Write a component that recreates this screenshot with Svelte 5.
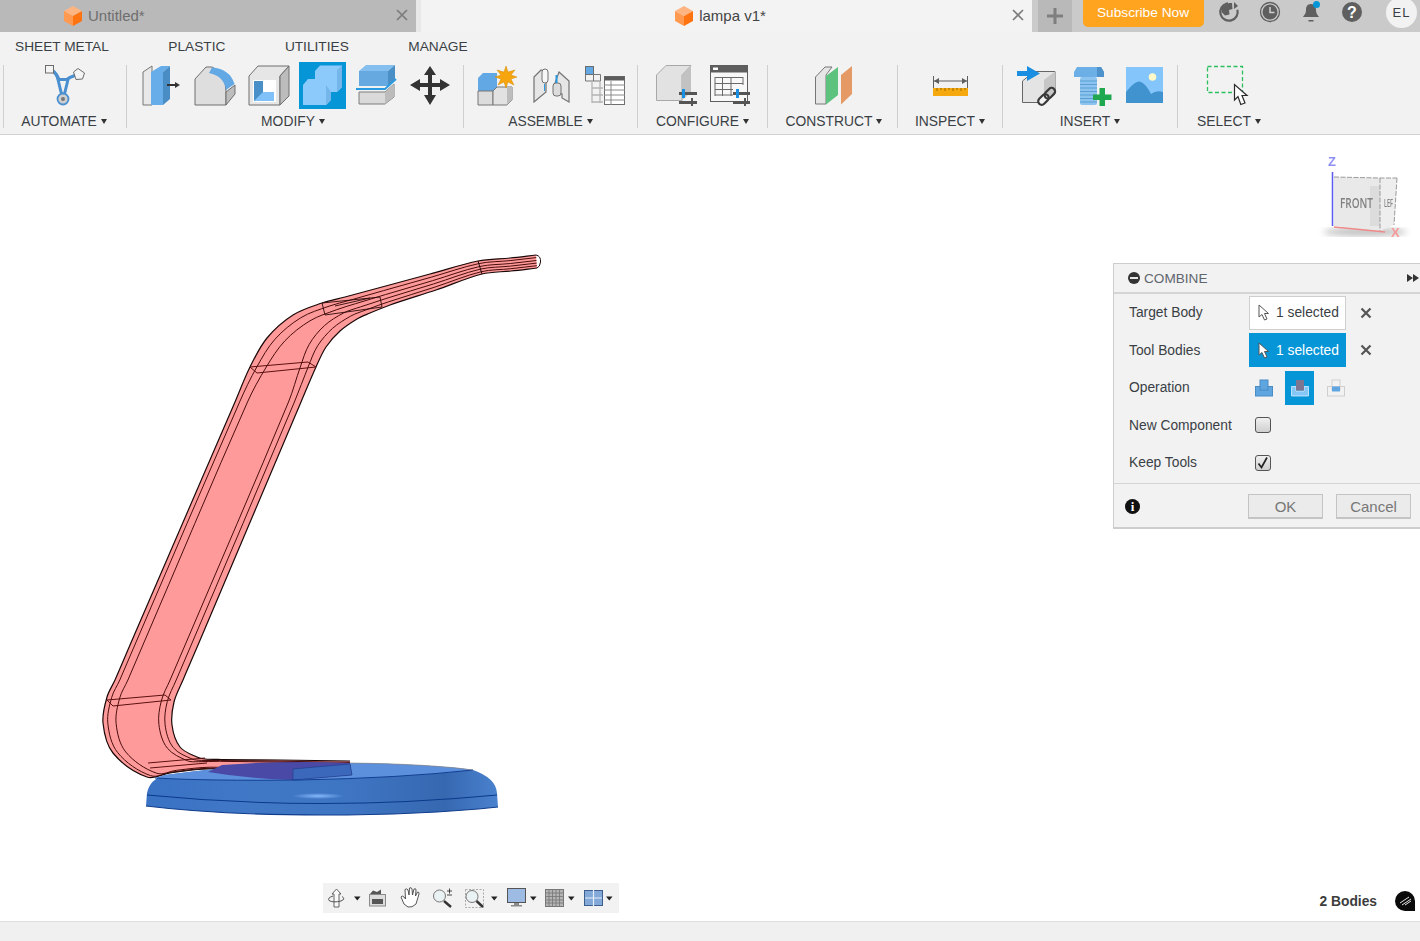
<script>
	// matched points along the two long edges of the lamp arm, foot to tip
	const outer = [[350,775],[280,772],[208,769],[170,773],[147,777],[113,753],[103,723],[107,697],[115,680],[130,645],[235,402],[250,367],[267,338],[293,315],[322,303],[345,297],[382,287],[430,274],[478,261],[510,258],[536,255]];
	const inner = [[350,761],[280,760],[222,759.5],[205,759],[197,757],[180,747],[172,725],[174,702],[183,680],[198,645],[301,402],[316,367],[326,347],[340,331],[357,319],[370,313],[390,305],[436,290],[482,274],[511,271],[537,268]];

	function spline(pts) {
		let d = `M${pts[0][0]} ${pts[0][1]}`;
		for (let i = 0; i < pts.length - 1; i++) {
			const p0 = pts[Math.max(i - 1, 0)];
			const p1 = pts[i];
			const p2 = pts[i + 1];
			const p3 = pts[Math.min(i + 2, pts.length - 1)];
			// clamp the tangents so a long straight run next to a short one can't overshoot
			const len = Math.hypot(p2[0] - p1[0], p2[1] - p1[1]);
			const tan = (a, b) => {
				const l = Math.hypot(b[0] - a[0], b[1] - a[1]) || 1;
				return [((b[0] - a[0]) / l) * len / 3, ((b[1] - a[1]) / l) * len / 3];
			};
			const t1 = tan(p0, p2);
			const t2 = tan(p1, p3);
			d += ` C${(p1[0] + t1[0]).toFixed(1)} ${(p1[1] + t1[1]).toFixed(1)} ${(p2[0] - t2[0]).toFixed(1)} ${(p2[1] - t2[1]).toFixed(1)} ${p2[0]} ${p2[1]}`;
		}
		return d;
	}

	// the inner lines sit near the edges on the wide part and spread out on the thin part
	function between(low, high) {
		return spline(outer.map((p, i) => {
			const k = Math.min(Math.max((i - 10) / 4, 0), 1);
			const t = low + (high - low) * k;
			return [
				+(p[0] + (inner[i][0] - p[0]) * t).toFixed(1),
				+(p[1] + (inner[i][1] - p[1]) * t).toFixed(1)
			];
		}));
	}

	const outerPath = spline(outer);
	const innerPath = spline(inner);
	const armFill = outerPath + " L" + spline([...inner].reverse()).slice(1) + " Z";
	const armLines = [[0.07, 0.2], [0.19, 0.42], [0.81, 0.62], [0.9, 0.82]].map(([a, b]) => between(a, b));

	const ribbonTabs = ["SHEET METAL", "PLASTIC", "UTILITIES", "MANAGE"];
</script>

{#snippet cube()}
	<svg class="cube" viewBox="0 0 18 20" aria-hidden="true">
		<path d="M9 0 L18 5 L9 10 L0 5Z" fill="#ffb581" />
		<path d="M0 5 L9 10 V20 L0 15Z" fill="#ff9a50" />
		<path d="M18 5 L9 10 V20 L18 15Z" fill="#ff7410" />
	</svg>
{/snippet}

{#snippet close()}
	<svg class="tab-close" viewBox="0 0 12 12" width="12" height="12" aria-hidden="true">
		<path d="M1 1 L11 11 M11 1 L1 11" stroke="#7c7c7c" stroke-width="1.700" />
	</svg>
{/snippet}

{#snippet caret()}
	<span class="caret"></span>
{/snippet}

<div class="app">
	<header class="tabbar">
		<div class="tab inactive">
			{@render cube()}
			<span class="tab-title">Untitled*</span>
			{@render close()}
		</div>
		<div class="tab-gap"></div>
		<div class="tab active">
			{@render cube()}
			<span class="tab-title">lampa v1*</span>
			{@render close()}
		</div>
		<div class="plus">
			<svg viewBox="0 0 16 16" width="16" height="16"><path d="M6.5 0h3v6.5H16v3H9.500V16h-3V9.500H0v-3h6.500z" fill="#7f7f7f" /></svg>
		</div>
		<div class="subscribe">Subscribe Now</div>
		<div class="top-icons">
			<svg viewBox="0 0 22 22" width="22" height="22">
				<circle cx="11" cy="11" r="8.700" fill="none" stroke="#5f5f5f" stroke-width="2.200" stroke-dasharray="42 13" transform="rotate(-15 11 11)" />
				<path d="M4 6 L11 2 L14 2 L14.500 8 L11 9 L11.500 13.500 L7 14.500 L3.500 11Z" fill="#5f5f5f" />
				<path d="M16 1 L20 5 L16 8Z" fill="#5f5f5f" />
			</svg>
			<svg viewBox="0 0 22 22" width="22" height="22">
				<circle cx="11" cy="11" r="9.500" fill="none" stroke="#5f5f5f" stroke-width="1.300" />
				<circle cx="11" cy="11" r="7.500" fill="#5f5f5f" />
				<path d="M11 6v5.500h4.500" fill="none" stroke="#d0d0d0" stroke-width="1.500" />
			</svg>
			<svg viewBox="0 0 22 22" width="22" height="22">
				<path d="M11 3c-4 0-5 3-5 6 0 4-2 5-3 7h16c-1-2-3-3-3-7 0-3-1-6-5-6z" fill="#5f5f5f" />
				<path d="M8.500 19h5v1.500h-5z" fill="#5f5f5f" />
				<circle cx="16.500" cy="3.500" r="3.500" fill="#0696d7" />
			</svg>
			<svg viewBox="0 0 22 22" width="22" height="22">
				<circle cx="11" cy="11" r="10" fill="#5f5f5f" />
				<text class="help" x="11" y="16.500" text-anchor="middle">?</text>
			</svg>
		</div>
		<div class="avatar">EL</div>
	</header>

	<nav class="ribbon-tabs">
		{#each ribbonTabs as t}
			<span>{t}</span>
		{/each}
	</nav>

	<section class="tools">
		<i class="sep"></i>
		<div class="group g-automate">
			<div class="icons">
				<div class="cell"><svg viewBox="39 62 48 48">
					<path d="M52 70 Q57 74 59 80 M76 75 Q70 77 66 80" fill="none" stroke="#4a90d0" stroke-width="3.400" />
					<path d="M58 79.500 H68 L64.500 94 H61.500Z" fill="#f2f2f2" stroke="#4a90d0" stroke-width="3" />
					<rect x="45.500" y="65.500" width="8" height="7.500" fill="#f4f4f4" stroke="#6c6c6c" />
					<path d="M73.500 72 L78 68.500 L84.500 73 L82.500 79 L76 79.500Z" fill="#f4f4f4" stroke="#6c6c6c" />
					<circle cx="63" cy="99" r="5.500" fill="#cfcfcf" stroke="#4a90d0" stroke-width="1.800" />
					<circle cx="63" cy="99" r="2" fill="#777" />
				</svg></div>
			</div>
			<div class="label">AUTOMATE {@render caret()}</div>
		</div>
		<i class="sep"></i>
		<div class="group g-modify">
			<div class="icons">
				<div class="cell"><svg viewBox="135 62 48 48">
					<path d="M143 105 V72 L152 66 V105Z" fill="#e8e8e8" stroke="#767676" />
					<path d="M151 105 V72 L161 66 H170 L163 72 V105Z" fill="#66ade9" />
					<path d="M163 72 L170 66 V99 L163 105Z" fill="#4a8cc4" />
					<path d="M167 85 H176" stroke="#333" stroke-width="2" />
					<path d="M175 82 L180 85 L175 88Z" fill="#333" />
				</svg></div>
				<div class="cell"><svg viewBox="189 62 48 48">
					<path d="M195 105 V79 L206 67 H212 Q226 72 226 92 V105Z" fill="#dedede" stroke="#6e6e6e" />
					<path d="M226 105 L235 94 V85 L226 92Z" fill="#bdbdbd" stroke="#6e6e6e" />
					<path d="M212 67.500 Q230 69 234.500 84 L226 90 Q224 76 209 73Z" fill="#62a8e4" />
				</svg></div>
				<div class="cell"><svg viewBox="243 62 48 48">
					<path d="M249 105 V76 L258 66 H289 L280 76 V105Z" fill="#e6e6e6" stroke="#6e6e6e" />
					<path d="M280 105 V76 L289 66 V96Z" fill="#bcbcbc" stroke="#6e6e6e" />
					<rect x="253" y="80" width="23" height="22" fill="#fff" />
					<path d="M254 81 H263 V92 H274 V101 H254Z" fill="#4a90c8" />
					<path d="M263 92 H274 V101 H254Z" fill="#7fc1f8" />
				</svg></div>
				<div class="cell pressed"><svg viewBox="297 62 48 48">
					<rect x="299" y="62" width="47" height="47" fill="#0696d7" />
					<path d="M303 105 V85 L308 79 H315 V71 L320 65.500 H342 V87 L337 92 H331 V100 L326 105Z" fill="#8ccafb" />
					<path d="M337 70 L342 65.500 V87 L337 92Z M326 85 L331 92 V100 L326 105Z" fill="#74b6ea" />
				</svg></div>
				<div class="cell"><svg viewBox="351 62 48 48">
					<path d="M359 71 L366 65 H395 L388 71Z" fill="#84bff0" />
					<rect x="359" y="71" width="29" height="15" fill="#66a8e0" />
					<path d="M388 71 L395 65 V80 L388 86Z" fill="#4a8fc6" />
					<path d="M356 89 H385 L396 79" fill="none" stroke="#2a9ae0" stroke-width="1.800" />
					<path d="M359 92 H385 L394 84 V97 L385 104 H359Z" fill="#dadada" stroke="#7c7c7c" />
					<path d="M385 92 L394 84 V97 L385 104Z" fill="#bcbcbc" />
				</svg></div>
				<div class="cell"><svg viewBox="405 62 48 48">
					<path d="M430 66 L436 75 H432 V83 H440 V79 L450 85 L440 91 V87 H432 V95 H436 L430 105 L424 95 H428 V87 H420 V91 L410 85 L420 79 V83 H428 V75 H424Z" fill="#333" />
				</svg></div>
			</div>
			<div class="label">MODIFY {@render caret()}</div>
		</div>
		<i class="sep"></i>
		<div class="group g-assemble">
			<div class="icons">
				<div class="cell"><svg viewBox="473 62 48 48">
					<path d="M478 78 L483 73 H497 V92 H478Z" fill="#62a8e4" />
					<path d="M478 91 H493 V105 H478Z" fill="#dcdcdc" stroke="#777" />
					<path d="M493 91 L497 87 H512 V100 L507 105 H493Z" fill="#e2e2e2" stroke="#777" />
					<path d="M507 87 L512 87 V100 L507 105Z" fill="#bdbdbd" />
					<path d="M506 66 L508 72 L515 70 L511 75 L517 77 L511 79 L514 85 L508 82 L506 88 L504 82 L498 85 L501 79 L495 77 L501 75 L497 70 L504 72Z" fill="#f6a50f" stroke="#d98a00" stroke-width=".5" />
				</svg></div>
				<div class="cell"><svg viewBox="527 62 48 48">
					<path d="M534 102 V77 L541 70 L546 72 V92Z" fill="#e6e6e6" stroke="#727272" stroke-width="1.200" />
					<rect x="542" y="69" width="6" height="14" rx="3" fill="#f6f6f6" stroke="#727272" />
					<path d="M544.500 84 V91" stroke="#2a9ae0" stroke-width="1" />
					<path d="M559 72 L569 81 V102 L562 98 V94 L555 92 V83Z" fill="#e6e6e6" stroke="#727272" stroke-width="1.200" />
					<rect x="553" y="83" width="8" height="13" rx="3" fill="#dcdcdc" stroke="#727272" />
					<path d="M556.500 75 V83" stroke="#2a9ae0" stroke-width="2" />
				</svg></div>
				<div class="cell"><svg viewBox="581 62 48 48">
					<rect x="585.500" y="66.500" width="8" height="8" fill="#62a8e4" stroke="#6c6c6c" />
					<path d="M585.500 74.500 V81 H600.500 V74.500 H593.500 V81" fill="none" stroke="#777" />
					<path d="M592 81 V103 M600 81 V103 M592 88 H603 M592 95 H603 M592 102 H603" fill="none" stroke="#b4b4b4" stroke-width="1.300" />
					<rect x="604.500" y="76.500" width="20" height="28" fill="#fff" stroke="#6e6e6e" />
					<rect x="604.500" y="76.500" width="20" height="4" fill="#5c5c5c" />
					<path d="M604 85 H625 M604 90 H625 M604 95 H625 M604 100 H625 M611 81 V105" stroke="#8a8a8a" stroke-width="1" />
				</svg></div>
			</div>
			<div class="label">ASSEMBLE {@render caret()}</div>
		</div>
		<i class="sep"></i>
		<div class="group g-configure">
			<div class="icons">
				<div class="cell"><svg viewBox="652 62 48 48">
					<path d="M656.500 100.500 V75 L666 65.500 H691 L682 75 V100.500Z" fill="#e2e2e2" stroke="#a8a8a8" />
					<path d="M682 75 L691 65.500 V92 L682 100.500Z" fill="#c2c2c2" />
					<rect x="679" y="92" width="18" height="3" fill="#555" />
					<rect x="679" y="101" width="18" height="3" fill="#555" />
					<rect x="682" y="89" width="3" height="9" fill="#1a8ee0" />
					<rect x="691" y="98" width="2" height="8" fill="#555" />
				</svg></div>
				<div class="cell"><svg viewBox="706 62 48 48">
					<rect x="710.500" y="65.500" width="37" height="36" fill="#f8f8f8" stroke="#5e5e5e" />
					<rect x="710.500" y="65.500" width="37" height="7" fill="#5e5e5e" />
					<rect x="713" y="67.500" width="5" height="2.500" fill="#fff" />
					<path d="M715 77.500 H743 M715 83.500 H743 M715 89.500 H733 M715 95 H733 M715 77 V96 M722.500 77 V96 M731 77 V96 M743 77 V85" stroke="#6a6a6a" fill="none" />
					<rect x="733" y="92" width="17" height="3" fill="#555" />
					<rect x="733" y="101" width="17" height="3" fill="#555" />
					<rect x="736" y="89" width="3" height="9" fill="#1a8ee0" />
					<rect x="744" y="98" width="2" height="8" fill="#555" />
				</svg></div>
			</div>
			<div class="label">CONFIGURE {@render caret()}</div>
		</div>
		<i class="sep"></i>
		<div class="group g-construct">
			<div class="icons">
				<div class="cell"><svg viewBox="809 62 48 48">
					<path d="M815.500 104 V77 L825 67 H832 L826 75 V104Z" fill="#e6e6e6" stroke="#777" />
					<path d="M826 104.500 V76 L838 67 V95Z" fill="#5cc27e" />
					<path d="M841 104.500 V75 L852 66 V94Z" fill="#e59a66" />
				</svg></div>
			</div>
			<div class="label">CONSTRUCT {@render caret()}</div>
		</div>
		<i class="sep"></i>
		<div class="group g-inspect">
			<div class="icons">
				<div class="cell"><svg viewBox="927 62 48 48">
					<path d="M934.500 76 V88 M968.500 76 V88 M935 81 H968" stroke="#5e5e5e" fill="none" />
					<path d="M935 81 L940 78 V84Z M968 81 L963 78 V84Z" fill="#5e5e5e" />
					<rect x="934" y="88" width="35" height="8" fill="#f5a90f" />
					<path d="M938 88 v3 M942 88 v2 M946 88 v3 M950 88 v2 M954 88 v3 M958 88 v2 M962 88 v3 M966 88 v2" stroke="#9a6a00" />
				</svg></div>
			</div>
			<div class="label">INSPECT {@render caret()}</div>
		</div>
		<i class="sep"></i>
		<div class="group g-insert">
			<div class="icons">
				<div class="cell"><svg viewBox="1014 62 48 48">
					<path d="M1022.500 102.500 V81 L1034 71.500 H1055 V93 L1046 102.500Z" fill="#e4e4e4" stroke="#666" />
					<path d="M1044 80 L1055 71.500 V93 L1044 102.500Z" fill="#c6c6c6" />
					<path d="M1017 71 H1027 V66 L1040 73.500 L1027 81 V76 H1017Z" fill="#1a8ee0" />
					<g fill="none" stroke="#3a3a3a" stroke-width="2.200" transform="rotate(-45 1047 96)">
						<rect x="1036" y="92.500" width="12" height="7" rx="3.500" fill="#f2f2f2" />
						<rect x="1045" y="92.500" width="12" height="7" rx="3.500" />
					</g>
				</svg></div>
				<div class="cell"><svg viewBox="1068 62 48 48">
					<path d="M1074 72 L1077 67 H1101 L1104 72 V77 H1074Z" fill="#6caee6" />
					<path d="M1097 67 H1101 L1104 72 V77 H1097Z" fill="#4d92cc" />
					<rect x="1080" y="77" width="17" height="28" rx="2" fill="#8cc4ef" />
					<path d="M1080 81 H1097 M1080 84.500 H1097 M1080 88 H1097 M1080 91.500 H1097 M1080 95 H1097 M1080 98.500 H1097 M1080 102 H1097" stroke="#5a9ed4" />
					<path d="M1099.500 88 H1105 V94.500 H1111.500 V100 H1105 V106 H1099.500 V100 H1093 V94.500 H1099.500Z" fill="#1fa84f" />
				</svg></div>
				<div class="cell"><svg viewBox="1122 62 48 48">
					<rect x="1126" y="67" width="37" height="36" fill="#84c6fb" />
					<path d="M1126 92 Q1136 79 1141 82 Q1146 84 1151 94 Q1156 90 1163 92 V103 H1126Z" fill="#4093cf" />
					<circle cx="1152.500" cy="77" r="3.800" fill="#fff8c8" />
				</svg></div>
			</div>
			<div class="label">INSERT {@render caret()}</div>
		</div>
		<i class="sep"></i>
		<div class="group g-select">
			<div class="icons">
				<div class="cell"><svg viewBox="1203 62 48 48">
					<rect x="1207.500" y="66.500" width="35" height="26" fill="none" stroke="#2cbf5f" stroke-width="1.300" stroke-dasharray="4 2.500" />
					<path d="M1234.500 84.500 V100 L1238 96.500 L1240.800 104.500 L1245 103 L1242 95.500 H1247Z" fill="#fff" stroke="#2a2a2a" stroke-width="1.200" />
				</svg></div>
			</div>
			<div class="label">SELECT {@render caret()}</div>
		</div>
	</section>

	<main class="viewport">
		<svg class="model" viewBox="0 135 1420 786" aria-hidden="true">
			<defs>
				<linearGradient id="rim" x1="0" x2="1" y1="0" y2="0">
					<stop offset="0" stop-color="#3a72c4" />
					<stop offset=".3" stop-color="#4178c6" />
					<stop offset=".55" stop-color="#3f76c4" />
					<stop offset=".85" stop-color="#3668b0" />
					<stop offset="1" stop-color="#4a82cf" />
				</linearGradient>
				<radialGradient id="glint">
					<stop offset="0" stop-color="#86b8fa" />
					<stop offset="1" stop-color="#86b8fa" stop-opacity="0" />
				</radialGradient>
			</defs>

			<path d={armFill} fill="#ff9a9a" />
			{#each armLines as d}
				<path {d} fill="none" stroke="#4a0c0c" stroke-width="1" />
			{/each}
			<path d={outerPath} fill="none" stroke="#1c0808" stroke-width="1.200" />
			<path d={innerPath} fill="none" stroke="#1c0808" stroke-width="1.200" />
			<path d="M536 255 Q541 256 540.500 262 Q540 267 537 268 M478 261 L482 274" fill="none" stroke="#1c0808" stroke-width="1" />
			<path d="M322 303 L380 297 L382 307 L325 315 Z M335 306 L370 298" fill="none" stroke="#2a0a0a" stroke-width=".9" />
			<path d="M250 367 L308 362 L316 367 L257 373 Z" fill="none" stroke="#5c1010" stroke-width="1" />
			<path d="M107 700 L165 695 L171 700 L113 706 Z" fill="none" stroke="#5c1010" stroke-width="1" />
			<path d="M148 763 L205 758 M150 768 L207 763" fill="none" stroke="#5c1010" stroke-width="1" />

			<path d="M146 806 L147 793 Q150 779 165 775 Q260 762 350 763 Q430 764 473 770 Q496 778 497 793 L498 807 Q420 815 323 815 Q220 815 146 806Z" fill="url(#rim)" />
			<path d="M165 775 Q260 762 350 763 Q430 764 473 770 Q400 778 300 780 Q210 781 155 778Z" fill="#5c90dc" />
			<path d="M222 765 Q290 760 350 763 L352 775 L293 780 Q250 779 208 772Z" fill="#4a4aa6" />
			<path d="M293 769 L350 764 L352 775 L293 780Z" fill="#3c68bc" stroke="#1f3f8c" stroke-width=".7" />
			<path d="M473 770 Q400 778 300 780 Q210 781 155 778" fill="none" stroke="#123f92" stroke-width="1" />
			<path d="M350 763 Q430 764 473 770" fill="none" stroke="#8a8a8a" stroke-width=".7" />
			<path d="M147 795 Q320 812 497 795" fill="none" stroke="#0c3a8a" stroke-width="1.100" />
			<path d="M146 806 Q220 815 323 815 Q420 815 498 807" fill="none" stroke="#103c8c" stroke-width="1.100" />
			<ellipse cx="318" cy="796" rx="26" ry="3" fill="url(#glint)" />
		</svg>

		<div class="viewcube" aria-hidden="true">
			<svg viewBox="1315 150 105 95" width="105" height="95">
				<defs>
					<filter id="soft"><feGaussianBlur stdDeviation=".5" /></filter>
					<filter id="shade"><feGaussianBlur stdDeviation="3" /></filter>
				</defs>
				<ellipse cx="1365" cy="232" rx="42" ry="4" fill="#bdbdbd" filter="url(#shade)" />
				<g filter="url(#soft)">
					<path d="M1334 177 L1380 178 L1380 231 L1334 226Z" fill="#e9e9e9" />
					<path d="M1380 178 L1397 178 L1394 225 L1380 231Z" fill="#eeeeee" />
					<rect x="1370" y="186" width="10" height="40" fill="#dcdcdc" />
					<path d="M1334 177 L1380 178 L1397 178 M1380 178 V231 M1397 178 L1394 225" fill="none" stroke="#9a9a9a" stroke-dasharray="5 1.500" />
					<text class="vc" transform="translate(1340 208) scale(1 1.25)" textLength="33" lengthAdjust="spacingAndGlyphs">FRONT</text>
					<text class="vc side" transform="translate(1384 207) scale(1 1.25)" textLength="9" lengthAdjust="spacingAndGlyphs">LEF</text>
					<path d="M1332.500 172 V226" stroke="#5a5af0" stroke-width="1.500" />
					<path d="M1334 227 L1385 232" stroke="#f08a8a" stroke-width="1.500" />
					<text class="axis z" x="1328" y="166">Z</text>
					<text class="axis x" x="1391" y="237">X</text>
				</g>
			</svg>
		</div>

		<aside class="panel">
			<div class="panel-head">
				<span class="minus"></span>
				<span class="panel-title">COMBINE</span>
				<span class="ff"></span>
			</div>
			<div class="rows">
				<div class="row">
					<span class="row-label">Target Body</span>
					<div class="picker">
						<svg viewBox="0 0 12 17" width="12" height="17"><path d="M1 1 V13 L4 10.500 L6.500 16 L9 15 L6.500 9.500 H10.500Z" fill="#fff" stroke="#555" /></svg>
						1 selected
					</div>
					<svg class="clear" viewBox="0 0 12 12" width="12" height="12"><path d="M1.500 1.500 L10.500 10.500 M10.500 1.500 L1.500 10.500" stroke="#555" stroke-width="2.200" /></svg>
				</div>
				<div class="row">
					<span class="row-label">Tool Bodies</span>
					<div class="picker on">
						<svg viewBox="0 0 12 17" width="12" height="17"><path d="M1 1 V13 L4 10.500 L6.500 16 L9 15 L6.500 9.500 H10.500Z" fill="#fff" stroke="#555" /></svg>
						1 selected
					</div>
					<svg class="clear" viewBox="0 0 12 12" width="12" height="12"><path d="M1.500 1.500 L10.500 10.500 M10.500 1.500 L1.500 10.500" stroke="#555" stroke-width="2.200" /></svg>
				</div>
				<div class="row">
					<span class="row-label">Operation</span>
					<div class="ops">
						<div class="op"><svg viewBox="0 0 18 18" width="18" height="18">
							<rect x=".5" y="7.500" width="17" height="9.500" fill="#5fa5e0" stroke="#4a8cc4" />
							<rect x="5" y="1" width="8" height="10" fill="#5fa5e0" stroke="#4a8cc4" />
						</svg></div>
						<div class="op on"><svg viewBox="0 0 18 18" width="18" height="18">
							<path d="M.5 7.500 H5 V12 H13 V7.500 H17.500 V17 H.5Z" fill="#86c7fa" stroke="#d6eeff" stroke-width=".8" />
							<rect x="5" y="1" width="8" height="10.500" fill="#7d7690" />
						</svg></div>
						<div class="op"><svg viewBox="0 0 18 18" width="18" height="18">
							<rect x=".5" y="7.500" width="17" height="9.500" fill="none" stroke="#cfcfcf" />
							<rect x="5" y="1" width="8" height="10" fill="none" stroke="#cfcfcf" />
							<rect x="5" y="7.500" width="8" height="5" fill="#5fa5e0" />
						</svg></div>
					</div>
				</div>
				<div class="row">
					<span class="row-label">New Component</span>
					<span class="check"></span>
				</div>
				<div class="row">
					<span class="row-label">Keep Tools</span>
					<span class="check">
						<svg viewBox="0 0 14 14" width="14" height="14"><path d="M2.500 7.500 L5.500 11.500 L11 1.500" fill="none" stroke="#222" stroke-width="1.700" /></svg>
					</span>
				</div>
			</div>
			<div class="panel-foot">
				<span class="info">i</span>
				<button class="btn ok">OK</button>
				<button class="btn">Cancel</button>
			</div>
		</aside>

		<div class="navbar" aria-hidden="true">
			<svg viewBox="323 883 296 30" width="296" height="30">
				<!-- orbit -->
				<path d="M336.500 889 L341 894 H339 V907 H334 V894 H332Z" fill="#fafafa" stroke="#555" stroke-width=".9" />
				<path d="M333 896 Q327 898 329 900.500 Q333 903 341 901 Q346 899 342 896.500" fill="none" stroke="#555" />
				<path d="M354 896.500 h6.500 l-3.250 4z" fill="#222" />
				<!-- look at -->
				<rect x="369.500" y="894.500" width="16" height="11.500" fill="#dcdcdc" stroke="#8a8a8a" />
				<rect x="372" y="899" width="11" height="5" fill="#555" />
				<path d="M370 894 L373 890.500 L377 892 L381 889.500 L381 894Z" fill="#555" />
				<!-- pan -->
				<path d="M404 904 L401 897 Q402 895 404 897 L405.500 899 L405 889.500 Q407 888 408 890 L409 895 L409.500 888 Q411.500 887 412 889 L412.500 895 L414 889 Q416 888 416 890 L415.500 896 L417.500 892 Q419.500 892 419 894 L416 904 Q412 908 408 907Z" fill="#fff" stroke="#444" stroke-width=".9" />
				<!-- zoom -->
				<circle cx="439.500" cy="896" r="6" fill="#eaf2f4" stroke="#777" />
				<path d="M444 901 L451 907" stroke="#333" stroke-width="2.400" />
				<path d="M447 891 h5 M449.500 888.500 v5 M447 895 h5" stroke="#333" stroke-width=".9" fill="none" />
				<!-- fit -->
				<rect x="465.500" y="889.500" width="18" height="18" fill="none" stroke="#aaa" stroke-dasharray="2 1.500" />
				<circle cx="472" cy="896.500" r="6" fill="#eaf2f4" stroke="#777" />
				<path d="M476.500 901 L483 907" stroke="#333" stroke-width="2.400" />
				<path d="M491 896.500 h6.500 l-3.250 4z" fill="#222" />
				<!-- display -->
				<rect x="507.500" y="888.500" width="18" height="14" fill="#9dbbe3" stroke="#555" />
				<path d="M514 903 h5 v2 h3 v1.500 h-11 v-1.500 h3z" fill="#8a8a8a" />
				<path d="M530 896.500 h6.500 l-3.250 4z" fill="#222" />
				<!-- grid -->
				<rect x="545.500" y="889.500" width="18" height="17" fill="#b4b4b4" stroke="#777" />
				<path d="M549 890 v16 M552.500 890 v16 M556 890 v16 M559.500 890 v16 M546 893 h17 M546 896.500 h17 M546 900 h17 M546 903 h17" stroke="#757575" stroke-width=".8" />
				<path d="M568 896.500 h6.500 l-3.250 4z" fill="#222" />
				<!-- viewports -->
				<rect x="584.500" y="890.500" width="18" height="15" fill="#82a9d8" stroke="#3e5f8e" />
				<path d="M593.500 890 V906 M585 898 H602" stroke="#e4eef8" stroke-width="1.200" />
				<path d="M606 896.500 h6.500 l-3.250 4z" fill="#222" />
			</svg>
		</div>

		<div class="bodies">
			<span>2 Bodies</span>
			<svg viewBox="0 0 20 20" width="20" height="20">
				<path d="M10 0 A10 10 0 1 0 10 20 H20 V10 A10 10 0 0 0 10 0Z" fill="#0a0a0a" />
				<path d="M5 12 L14 6 M7 14 L16 8 M10 14 L16 10" stroke="#e4e4e4" stroke-width="1" />
			</svg>
		</div>
	</main>

	<footer class="status"></footer>
</div>

<style>
	:global(body) {
		margin: 0;
		background: #fff;
	}
	.app {
		display: flex;
		flex-direction: column;
		height: 100vh;
		overflow: hidden;
		font-family: "Liberation Sans", Arial, sans-serif;
		color: #3a3f45;
	}

	/* title strip */
	.tabbar {
		display: flex;
		flex: none;
		height: 32px;
		background: #cacaca;
	}
	.tab {
		position: relative;
		display: flex;
		align-items: center;
		justify-content: center;
		padding-bottom: 1px;
		box-sizing: border-box;
		font-size: 15px;
	}
	.tab.inactive {
		width: 416px;
		justify-content: flex-start;
		padding-left: 64px;
		background: #b9b9b9;
		color: #6e6e6e;
	}
	.tab-gap {
		width: 5px;
		background: #e8e8e8;
	}
	.tab.active {
		width: 611px;
		padding-right: 12px;
		background: #f3f3f3;
		color: #444;
	}
	.cube {
		width: 18px;
		height: 20px;
		margin-right: 6px;
	}
	.tab-close {
		position: absolute;
		right: 8px;
		top: 9px;
	}
	.plus {
		display: flex;
		align-items: center;
		justify-content: center;
		width: 34px;
		margin-left: 6px;
		background: #b9b9b9;
	}
	.subscribe {
		display: flex;
		align-items: center;
		justify-content: center;
		width: 121px;
		height: 27px;
		padding: 0 1px 2px 0;
		box-sizing: border-box;
		margin-left: 11px;
		border-radius: 0 0 5px 5px;
		background: #ffa41f;
		color: #fff;
		font-size: 13.700px;
	}
	.top-icons {
		display: flex;
		align-items: flex-start;
		gap: 19px;
		margin-left: 14px;
		padding-top: 1px;
	}
	.help {
		font-family: "Liberation Sans", sans-serif;
		font-size: 16px;
		font-weight: 700;
		fill: #fff;
	}
	.avatar {
		display: flex;
		align-items: center;
		justify-content: center;
		width: 31px;
		height: 31px;
		margin: -3px 0 0 23px;
		border-radius: 50%;
		background: #f2f2f2;
		font-size: 13px;
		letter-spacing: 1px;
	}

	/* ribbon */
	.ribbon-tabs {
		display: flex;
		flex: none;
		gap: 59.500px;
		align-items: center;
		height: 26px;
		padding: 2px 0 0 15px;
		box-sizing: border-box;
		background: #f2f2f2;
		font-size: 13.700px;
	}
	.tools {
		display: flex;
		flex: none;
		height: 77px;
		padding: 4px 0 0 3px;
		box-sizing: border-box;
		background: #f2f2f2;
		border-bottom: 1px solid #d2d2d2;
	}
	.sep {
		flex: none;
		width: 1px;
		height: 63px;
		margin-top: 3px;
		background: #cfcfcf;
	}
	.group {
		flex: none;
		display: flex;
		flex-direction: column;
		align-items: center;
	}
	.g-automate { width: 122px; }
	.g-modify { width: 336px; }
	.g-assemble { width: 173px; }
	.g-configure { width: 129px; }
	.g-construct { width: 129px; }
	.g-inspect { width: 104px; }
	.g-insert { width: 174px; }
	.g-select { width: 102px; }
	.g-automate .icons { margin-right: 4px; }
	.g-automate .label { margin-right: 2px; }
	.g-modify .icons { margin-right: 2px; }
	.g-modify .label { margin-right: 4px; }
	.g-construct .label { margin-left: 3px; }
	.g-insert .icons { margin-left: 4px; }
	.g-select .icons { margin-right: 4px; }
	.icons {
		display: flex;
		gap: 6px;
		height: 48px;
	}
	.cell {
		width: 48px;
		height: 48px;
	}
	.cell svg {
		display: block;
		width: 48px;
		height: 48px;
	}
	.pressed svg {
		overflow: visible;
	}
	.label {
		display: flex;
		align-items: center;
		gap: 4px;
		height: 16px;
		margin-top: 3px;
		font-size: 13.850px;
		line-height: 16px;
		white-space: nowrap;
	}
	.caret {
		width: 0;
		height: 0;
		border-left: 3.5px solid transparent;
		border-right: 3.5px solid transparent;
		border-top: 5px solid #333;
	}

	/* canvas */
	.viewport {
		position: relative;
		flex: 1;
		background: #fff;
	}
	.model {
		position: absolute;
		inset: 0;
		width: 100%;
		height: 100%;
	}
	.viewcube {
		position: absolute;
		right: 0;
		top: 15px;
		height: 95px;
	}
	.vc {
		font-family: "Open Sans", sans-serif;
		font-size: 11.500px;
		font-weight: 600;
		fill: #808080;
	}
	.vc.side {
		font-size: 8px;
	}
	.axis {
		font-family: "Liberation Sans", sans-serif;
		font-size: 13px;
		font-weight: 700;
	}
	.axis.z { fill: #8f8ff5; }
	.axis.x { fill: #f59a9a; }

	/* dialog */
	.panel {
		position: absolute;
		top: 128px;
		right: 0;
		width: 307px;
		height: 266px;
		display: flex;
		flex-direction: column;
		box-sizing: border-box;
		background: #f2f2f2;
		border: 1px solid #cdcdcd;
		border-right: none;
		border-bottom-width: 2px;
		font-size: 13.800px;
	}
	.panel-head {
		display: flex;
		align-items: center;
		flex: none;
		height: 30px;
		padding-left: 14px;
		border-bottom: 2px solid #d4d4d4;
		box-sizing: border-box;
		color: #5f666e;
	}
	.minus {
		position: relative;
		width: 12px;
		height: 12px;
		margin-right: 4px;
		border-radius: 50%;
		background: #333;
	}
	.minus::after {
		content: "";
		position: absolute;
		left: 2px;
		right: 2px;
		top: 5px;
		height: 2px;
		background: #e8e8e8;
	}
	.panel-title {
		flex: 1;
		font-size: 13.600px;
	}
	.ff {
		width: 0;
		height: 0;
		margin-right: 7px;
		border-left: 6px solid #333;
		border-top: 4px solid transparent;
		border-bottom: 4px solid transparent;
	}
	.ff::after {
		content: "";
		display: block;
		width: 0;
		height: 0;
		margin: -4px 0 0 0;
		border-left: 6px solid #333;
		border-top: 4px solid transparent;
		border-bottom: 4px solid transparent;
	}
	.rows {
		flex: none;
		height: 189.500px;
		padding-top: .3px;
		box-sizing: border-box;
		border-bottom: 1px solid #d4d4d4;
	}
	.row {
		display: flex;
		align-items: center;
		height: 37.400px;
		padding-left: 15px;
	}
	.row-label {
		flex: none;
		width: 120px;
	}
	.picker {
		display: flex;
		align-items: center;
		gap: 6px;
		width: 97px;
		height: 34px;
		padding-left: 8px;
		box-sizing: border-box;
		background: #fff;
		border: 1px solid #cfcfcf;
	}
	.picker.on {
		background: #0696d7;
		border-color: #0696d7;
		color: #fff;
	}
	.clear {
		margin-left: 14px;
	}
	.ops {
		display: flex;
		gap: 7px;
	}
	.op {
		display: flex;
		align-items: center;
		justify-content: center;
		width: 29px;
		height: 34px;
	}
	.op.on {
		background: #0696d7;
	}
	.check {
		display: flex;
		align-items: center;
		justify-content: center;
		width: 16px;
		height: 16px;
		margin-left: 6px;
		box-sizing: border-box;
		border: 1px solid #555;
		border-radius: 3px;
		background: linear-gradient(#f0f0f0, #cfcfcf);
	}
	.panel-foot {
		display: flex;
		align-items: center;
		flex: 1;
		padding: 3px 9px 0 11px;
	}
	.info {
		display: flex;
		align-items: center;
		justify-content: center;
		width: 15px;
		height: 15px;
		margin-right: auto;
		border-radius: 50%;
		background: #111;
		color: #fff;
		font-family: "Liberation Serif", serif;
		font-size: 13px;
		font-weight: 700;
	}
	.btn {
		width: 75px;
		height: 25px;
		padding: 0;
		margin-left: 13px;
		background: #ebebeb;
		border: 1px solid #c4c4c4;
		border-bottom-width: 2px;
		font: inherit;
		font-size: 15px;
		color: #777;
	}

	/* overlays at the bottom of the canvas */
	.navbar {
		position: absolute;
		left: 323px;
		bottom: 8px;
		height: 30px;
		background: #f2f2f2;
	}
	.navbar svg {
		display: block;
	}
	.bodies {
		position: absolute;
		right: 5px;
		bottom: 10px;
		display: flex;
		align-items: center;
		gap: 18px;
		font-size: 13.800px;
		font-weight: 700;
		color: #3c3c3c;
	}
	.status {
		flex: none;
		height: 20px;
		box-sizing: border-box;
		background: #f0f0f0;
		border-top: 1px solid #dedede;
	}
</style>
